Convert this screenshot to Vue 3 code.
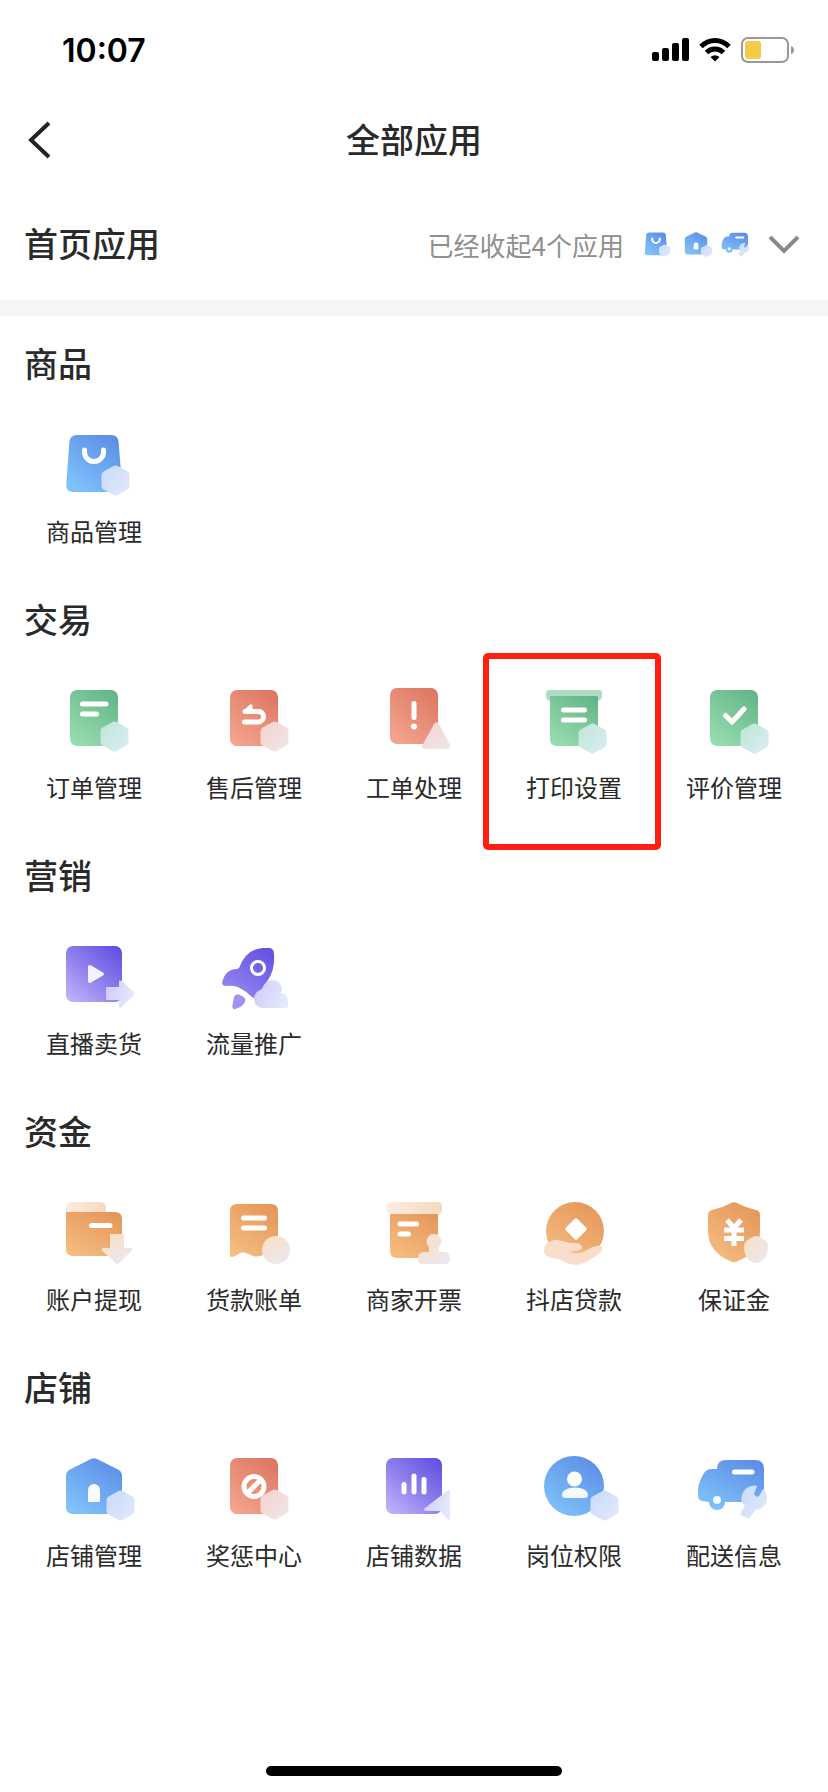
<template>
  <div class="page">
    <svg class="sprite" width="0" height="0" aria-hidden="true">
      <defs>
        <linearGradient id="blue" x1="0.9" y1="0" x2="0.2" y2="1">
          <stop offset="0" stop-color="#5b8be6" />
          <stop offset="1" stop-color="#80c3fa" />
        </linearGradient>
        <linearGradient id="green" x1="0.9" y1="0" x2="0.2" y2="1">
          <stop offset="0" stop-color="#63b487" />
          <stop offset="1" stop-color="#97dcb0" />
        </linearGradient>
        <linearGradient id="red" x1="0.9" y1="0" x2="0.2" y2="1">
          <stop offset="0" stop-color="#dd7660" />
          <stop offset="1" stop-color="#f3a48e" />
        </linearGradient>
        <linearGradient id="purple" x1="0.95" y1="0.05" x2="0.1" y2="1">
          <stop offset="0" stop-color="#6250e2" />
          <stop offset="0.5" stop-color="#8d7eec" />
          <stop offset="1" stop-color="#beb2fb" />
        </linearGradient>
        <linearGradient id="rocket-body" x1="0.9" y1="0" x2="0.2" y2="1">
          <stop offset="0" stop-color="#6250e2" />
          <stop offset="1" stop-color="#9688ef" />
        </linearGradient>
        <linearGradient id="orange" x1="0.9" y1="0" x2="0.2" y2="1">
          <stop offset="0" stop-color="#e59558" />
          <stop offset="1" stop-color="#f5bc80" />
        </linearGradient>
        <linearGradient id="blue-soft" x1="0" y1="0" x2="1" y2="1">
          <stop offset="0" stop-color="#c6dcfb" />
          <stop offset="1" stop-color="#e4e8fc" />
        </linearGradient>
        <linearGradient id="green-soft" x1="0" y1="0" x2="1" y2="1">
          <stop offset="0" stop-color="#bde7d3" />
          <stop offset="1" stop-color="#dcecf6" />
        </linearGradient>
        <linearGradient id="red-soft" x1="0" y1="0" x2="1" y2="1">
          <stop offset="0" stop-color="#f5d2cb" />
          <stop offset="1" stop-color="#efe8ea" />
        </linearGradient>
        <linearGradient id="purple-soft" x1="0" y1="0" x2="1" y2="0.3">
          <stop offset="0" stop-color="#cfc8fa" />
          <stop offset="1" stop-color="#e2e9fc" />
        </linearGradient>
        <linearGradient id="orange-soft" x1="0.1" y1="0" x2="0.7" y2="1">
          <stop offset="0" stop-color="#f8dfc5" />
          <stop offset="1" stop-color="#ece8ed" />
        </linearGradient>
        <linearGradient id="banner" x1="0" y1="0" x2="1" y2="0">
          <stop offset="0" stop-color="#fbece0" />
          <stop offset="1" stop-color="#f6dabb" />
        </linearGradient>

        <path id="hex" d="M12.5 1 Q14.5 0 16.500 1 L26.500 6.500 Q28.500 7.500 28.500 10 V21 Q28.500 23.500 26.500 24.500 L16.500 30 Q14.500 31 12.500 30 L2.500 24.500 Q0.500 23.500 0.500 21 V10 Q0.500 7.500 2.500 6.500 Z" />
        <rect id="sheet" x="16" y="10" width="48" height="56" rx="7" />

        <g id="icon-bag">
          <path fill="url(#blue)" d="M23 11 H57 Q64 11 64.600 18 L68 61 Q68 68 61 68 H19 Q12 68 12.200 61 L15.400 18 Q16 11 23 11 Z" />
          <path class="line" d="M30.500 26 V28 A9.500 9.500 0 0 0 49.500 28 V26" />
          <use href="#hex" x="47" y="41" fill="url(#blue-soft)" />
        </g>

        <g id="icon-order">
          <use href="#sheet" fill="url(#green)" />
          <path class="line" d="M28.500 24 H52 M28.500 34 H42.500" />
          <use href="#hex" x="46" y="41" fill="url(#green-soft)" />
        </g>

        <g id="icon-refund">
          <use href="#sheet" fill="url(#red)" />
          <path fill="#fff" d="M30 30 L36 24.500 Q38.500 23.500 38.500 26.500 V33 H31 Z" />
          <path class="line" d="M31 31.500 H45 A5.300 5.300 0 0 1 45 42 H30.500" />
          <use href="#hex" x="46" y="41" fill="url(#red-soft)" />
        </g>

        <g id="icon-ticket">
          <rect x="16" y="8" width="48" height="56" rx="7" fill="url(#red)" />
          <path class="line" d="M40 23.500 V37.500" />
          <circle cx="40" cy="46.500" r="3" fill="#fff" />
          <path fill="url(#red-soft)" d="M60 44 Q62.500 40.500 65 44 L76 65 Q77 69 73 69 H51 Q47 69 48.500 65 Z" />
        </g>

        <g id="icon-print">
          <path fill="#afdcc4" d="M15 10 H65 Q68 10 68 13 V16 Q68 20 64 21 H16 Q12 20 12 16 V13 Q12 10 15 10 Z" />
          <path fill="url(#green)" d="M16 16 H64 V59 Q64 66 57 66 H23 Q16 66 16 59 Z" />
          <path class="line" d="M29.500 30 H50.500 M29.500 40 H50.500" />
          <use href="#hex" x="44" y="43" fill="url(#green-soft)" />
        </g>

        <g id="icon-review">
          <use href="#sheet" fill="url(#green)" />
          <path class="line" d="M31.500 35.500 L38 42 L50 29" />
          <use href="#hex" x="46" y="43" fill="url(#green-soft)" />
        </g>

        <g id="icon-live">
          <rect x="12" y="10" width="56" height="56" rx="7" fill="url(#purple)" />
          <path fill="#f5f3ff" d="M34 31 Q34 28 37 29.500 L49 36.500 Q51 38 49 39.500 L37 46.500 Q34 48 34 45 Z" />
          <path fill="url(#purple-soft)" d="M53 51 H65 V46 Q65 43 67.500 45 L79.500 56 Q81 58 79.500 59.500 L67.500 71 Q65 73 65 70 V64 H53 Q52 64 52 63 V52 Q52 51 53 51 Z" />
        </g>

        <g id="icon-rocket">
          <path fill="url(#rocket-body)" d="M25 32 Q32 13 49 12 L56 12 Q60 13 60 18 Q61 34 54 44 L43 61 Q41 63 38 61 Q32 55 24 51 Q17 49 11 50 Q7 49 8.500 45 Q12 33 23 33 Z" />
          <circle cx="44" cy="32" r="6.500" fill="none" stroke="#fff" stroke-width="3" />
          <path fill="#a093f3" d="M20 61 Q22 57 26 59 Q33 62 31 66 Q29 71 21 73 Q18 74 18.500 69 Z" />
          <path fill="url(#purple-soft)" d="M49 72 Q40 71 40 63 Q40 56 48 53 Q51 44 59 44 Q67 44 68 54 L67 57 Q74 58 74 66 V69 Q74 72 71 72 Z" />
        </g>

        <g id="icon-wallet">
          <path fill="url(#banner)" d="M18 10 H46 Q52 10 52 17 V22 H12 V16 Q12 10 18 10 Z" />
          <path fill="url(#orange)" d="M12 20 H61 Q68 20 68 27 V57 Q68 64 61 64 H19 Q12 64 12 57 Z" />
          <path class="line" d="M37.500 33.500 H56" />
          <path fill="url(#orange-soft)" d="M57 42 H69 Q70 42 70 43 V56 H76 Q79.500 56 77.500 59 L65 71 Q63.500 73 61.500 71 L48.500 59 Q46.500 56 50 56 H56 V43 Q56 42 57 42 Z" />
        </g>

        <g id="icon-bill">
          <path fill="url(#orange)" d="M23 12 H57 Q64 12 64 19 V63 Q57 58 52 61 Q45 66 39 64 Q35 62 32 61 Q28 59 23 63 Q16 67 16 63 V19 Q16 12 23 12 Z" />
          <path class="line" d="M29.500 26 H50.500 M29.500 36 H50.500" />
          <circle cx="62" cy="58" r="14" fill="url(#orange-soft)" />
        </g>

        <g id="icon-invoice">
          <path fill="url(#orange)" d="M16 20 H64 V59 Q64 66 57 66 H23 Q16 66 16 59 Z" />
          <rect x="13" y="10" width="55" height="12" rx="4" fill="url(#banner)" />
          <path class="line" d="M26 32 H42.500 M26 42 H34.500" />
          <path fill="url(#orange-soft)" d="M60 42 A7.500 7.500 0 0 1 65 55 V60 H70 Q76 60 76 67 Q76 72 71 72 H49 Q44 72 44 67 Q44 60 50 60 H55 V55 A7.500 7.500 0 0 1 60 42 Z" />
        </g>

        <g id="icon-loan">
          <circle cx="41" cy="39" r="29" fill="url(#orange)" />
          <path fill="#fff" d="M40.500 27 Q42 25.500 43.500 27 L52 35.500 Q53.500 37 52 38.500 L43.500 47 Q42 48.500 40.500 47 L32 38.500 Q30.500 37 32 35.500 Z" />
          <path fill="#f8deca" d="M11 53 Q19 46 28 49 Q33 51 42 51 Q49 52 48 57 Q43 60 36 60 Q45 63 53 58 Q61 53 67 54 Q70 56 67 60 Q54 71 43 73 Q36 73 29 69 Q24 66 18 66 Q10 64 10 59 Z" />
          <path fill="none" stroke="#f1c9a4" stroke-width="1" d="M48 57 Q43 60 36 60 Q45 63 53 58" />
        </g>

        <g id="icon-deposit">
          <path fill="url(#orange)" d="M37 11 Q40 9.500 43 11 Q52 16 62 18 Q66 19 66 23 V39 Q66 60 43 69.500 Q40 71 37 69.500 Q14 60 14 39 V23 Q14 19 18 18 Q28 16 37 11 Z" />
          <path fill="none" stroke="#fff" stroke-width="5" d="M33 28 L40 36 L47 28 M30 38 H50 M30 46.500 H50 M40 36 V54" />
          <path fill="url(#orange-soft)" d="M62 44 Q65 44 72 49 Q74 51 74 55 Q74 66 66 70 Q62 72 58 70 Q50 66 50 55 Q50 50 53 48.500 Q59 44 62 44 Z" />
        </g>

        <g id="icon-shop">
          <path fill="url(#blue)" d="M37 11 Q40 9.500 43 11 L65 22 Q68 24 68 27 V59 Q68 66 61 66 H19 Q12 66 12 59 V27 Q12 24 15 22 Z" />
          <path fill="#f6fbff" d="M34 42 A6 6 0 0 1 46 42 V53 Q46 54 45 54 H35 Q34 54 34 53 Z" />
          <use href="#hex" x="52" y="42" fill="url(#blue-soft)" />
        </g>

        <g id="icon-reward">
          <use href="#sheet" fill="url(#red)" />
          <circle cx="40" cy="38.500" r="10" fill="none" stroke="#fff" stroke-width="5" />
          <path class="line" d="M34 44.500 L46 32.500" />
          <use href="#hex" x="46" y="41" fill="url(#red-soft)" />
        </g>

        <g id="icon-data">
          <rect x="12" y="10" width="56" height="56" rx="7" fill="url(#purple)" />
          <path class="line" d="M30 36.500 V44 M40 28 V44 M50 31.500 V44" />
          <path fill="url(#purple-soft)" d="M51 60 L73 43 Q76 41 76 44 V70 Q76 73 73 70.500 L66 63 L52 63 Q48 62 51 60 Z" />
        </g>

        <g id="icon-staff">
          <circle cx="40" cy="38" r="30" fill="url(#blue)" />
          <circle cx="40.500" cy="31" r="7.500" fill="#fff" />
          <path fill="#f3f9ff" d="M28 47 Q29 39.500 41 39.500 Q53 39.500 54 47 Q54 50 50 50 H32 Q28 50 28 47 Z" />
          <use href="#hex" x="56" y="42" fill="url(#blue-soft)" />
        </g>

        <g id="icon-delivery">
          <path fill="url(#blue)" d="M32 12 H61 Q70 12 70 21 V45 Q70 54 61 54 H31 A8 8 0 0 1 15 54 L8 53 Q4 52 4 48 V41 Q5 33 10 25 Q13 21 18 21 H23 Q23 12 32 12 Z" />
          <circle cx="23" cy="52" r="4" fill="#f4fbff" />
          <path class="line" d="M40.500 24 H58" />
          <path fill="url(#blue-soft)" d="M57 38 Q62 37 63 38 L60 46 Q62 50 65 48 L69 41 Q73 44 73 51 Q71 61 61 62 L56 70 Q55 71 53 70 L47 67 Q46 66 47 64 L51 58 Q46 54 48 47 Q50 40 57 38 Z" />
        </g>
      </defs>
    </svg>

    <header class="status">
      <time class="clock">10:07</time>
      <div class="indicators">
        <svg width="37" height="24" viewBox="0 0 37 24" aria-hidden="true">
          <rect x="0" y="14" width="7" height="9" rx="2" />
          <rect x="10" y="10" width="7" height="13" rx="2" />
          <rect x="20" y="5" width="7" height="18" rx="2" />
          <rect x="30" y="0" width="7" height="23" rx="2" />
        </svg>
        <svg width="32" height="24" viewBox="0 0 32 24" aria-hidden="true">
          <path fill="none" stroke="#000" stroke-width="5" d="M2 8.600 Q8 2.400 16 2.400 Q24 2.400 30 8.600" />
          <path fill="none" stroke="#000" stroke-width="5" d="M7.500 14.500 Q11 11 16 11 Q21 11 24.500 14.500" />
          <path d="M11.500 19 Q16 15.500 20.500 19 L16 23.500 Z" />
        </svg>
        <svg width="53" height="26" viewBox="0 0 53 26" aria-hidden="true">
          <rect x="1" y="1" width="46" height="24" rx="6" fill="#fff" stroke="#98989a" stroke-width="2" />
          <rect x="4" y="4" width="16" height="18" rx="3" fill="#f5cb45" />
          <path fill="#98989a" d="M50 9 Q53 10 53 13 Q53 16 50 17 Z" />
        </svg>
      </div>
    </header>

    <nav class="navbar">
      <button class="back" type="button" aria-label="返回">
        <svg width="24" height="38" viewBox="0 0 24 38" aria-hidden="true">
          <path fill="none" stroke="#222" stroke-width="4" d="M21 2 L3 19 L21 36" />
        </svg>
      </button>
      <h1 class="title">全部应用</h1>
    </nav>

    <section class="home">
      <h2 class="heading">首页应用</h2>
      <button class="collapsed" type="button" :aria-expanded="false">
        <span>已经收起4个应用</span>
        <span class="minis">
          <svg v-for="icon in homeIcons" :key="icon" class="mini" viewBox="0 0 80 80" aria-hidden="true">
            <use :href="'#icon-' + icon" />
          </svg>
        </span>
        <svg width="32" height="18" viewBox="0 0 32 18" aria-hidden="true">
          <path fill="none" stroke="#8a8a8a" stroke-width="4" d="M2 2 L16 16 L30 2" />
        </svg>
      </button>
    </section>

    <main>
      <section v-for="group in groups" :key="group.title" class="group">
        <h2 class="heading">{{ group.title }}</h2>
        <div class="grid">
          <button
            v-for="app in group.apps"
            :key="app.name"
            class="app"
            :class="{ marked: app.marked }"
            type="button"
          >
            <svg class="icon" viewBox="0 0 80 80" aria-hidden="true">
              <use :href="'#icon-' + app.icon" />
            </svg>
            <span>{{ app.name }}</span>
          </button>
        </div>
      </section>
    </main>

    <div class="indicator-bar"></div>
  </div>
</template>

<script setup>
const homeIcons = ["bag", "shop", "delivery"];

const groups = [
  {
    title: "商品",
    apps: [{ name: "商品管理", icon: "bag" }],
  },
  {
    title: "交易",
    apps: [
      { name: "订单管理", icon: "order" },
      { name: "售后管理", icon: "refund" },
      { name: "工单处理", icon: "ticket" },
      { name: "打印设置", icon: "print", marked: true },
      { name: "评价管理", icon: "review" },
    ],
  },
  {
    title: "营销",
    apps: [
      { name: "直播卖货", icon: "live" },
      { name: "流量推广", icon: "rocket" },
    ],
  },
  {
    title: "资金",
    apps: [
      { name: "账户提现", icon: "wallet" },
      { name: "货款账单", icon: "bill" },
      { name: "商家开票", icon: "invoice" },
      { name: "抖店贷款", icon: "loan" },
      { name: "保证金", icon: "deposit" },
    ],
  },
  {
    title: "店铺",
    apps: [
      { name: "店铺管理", icon: "shop" },
      { name: "奖惩中心", icon: "reward" },
      { name: "店铺数据", icon: "data" },
      { name: "岗位权限", icon: "staff" },
      { name: "配送信息", icon: "delivery" },
    ],
  },
];
</script>

<style>
body {
  margin: 0;
  background: #fff;
}
</style>

<style scoped>
.page {
  display: flex;
  flex-direction: column;
  min-height: 100vh;
  box-sizing: border-box;
  padding-bottom: 16px;
  background: #fff;
  color: #2a2a2a;
  font-family: "Noto Sans CJK SC", sans-serif;
}
.sprite {
  position: absolute;
}
.line {
  fill: none;
  stroke: #fff;
  stroke-width: 5;
  stroke-linecap: round;
  stroke-linejoin: round;
}
button {
  padding: 0;
  border: none;
  background: none;
  color: inherit;
  font-family: inherit;
  cursor: pointer;
}
svg {
  display: block;
  overflow: visible;
}
.status {
  display: flex;
  align-items: center;
  justify-content: space-between;
  box-sizing: border-box;
  height: 92px;
  padding: 8px 34px 0 62px;
}
.clock {
  color: #000;
  font-family: Inter, sans-serif;
  font-size: 32px;
  font-weight: 600;
}
.indicators {
  display: flex;
  align-items: center;
  gap: 10px;
}
.navbar {
  display: grid;
  grid-template-columns: 1fr auto 1fr;
  align-items: center;
  height: 96px;
  padding: 0 28px;
}
.back {
  justify-self: start;
}
.title,
.heading {
  margin: 0;
  padding-bottom: 2px;
  font-size: 34px;
  font-weight: 500;
  line-height: 48px;
}
.home {
  display: flex;
  align-items: center;
  justify-content: space-between;
  height: 112px;
  padding: 0 28px 0 24px;
  border-bottom: 16px solid #f4f5f7;
}
.collapsed {
  display: flex;
  align-items: center;
  gap: 16px;
  color: #8f8f8f;
  font-size: 26px;
}
.minis {
  display: flex;
  gap: 8px;
}
.mini {
  width: 32px;
  height: 32px;
}
.group .heading {
  padding: 23px 24px 25px;
}
.grid {
  display: grid;
  grid-template-columns: repeat(5, 1fr);
  padding: 0 14px;
}
.app {
  position: relative;
  display: flex;
  flex-direction: column;
  align-items: center;
  gap: 11px;
  padding: 12px 0 25px;
  font-size: 24px;
  line-height: 32px;
}
.marked::after {
  content: "";
  position: absolute;
  inset: -15px -7px -22px -11px;
  border: 6px solid #ff1f10;
  border-radius: 5px;
}
.icon {
  width: 80px;
  height: 80px;
}
.indicator-bar {
  align-self: center;
  width: 296px;
  height: 10px;
  margin-top: auto;
  border-radius: 5px;
  background: #000;
}
</style>
